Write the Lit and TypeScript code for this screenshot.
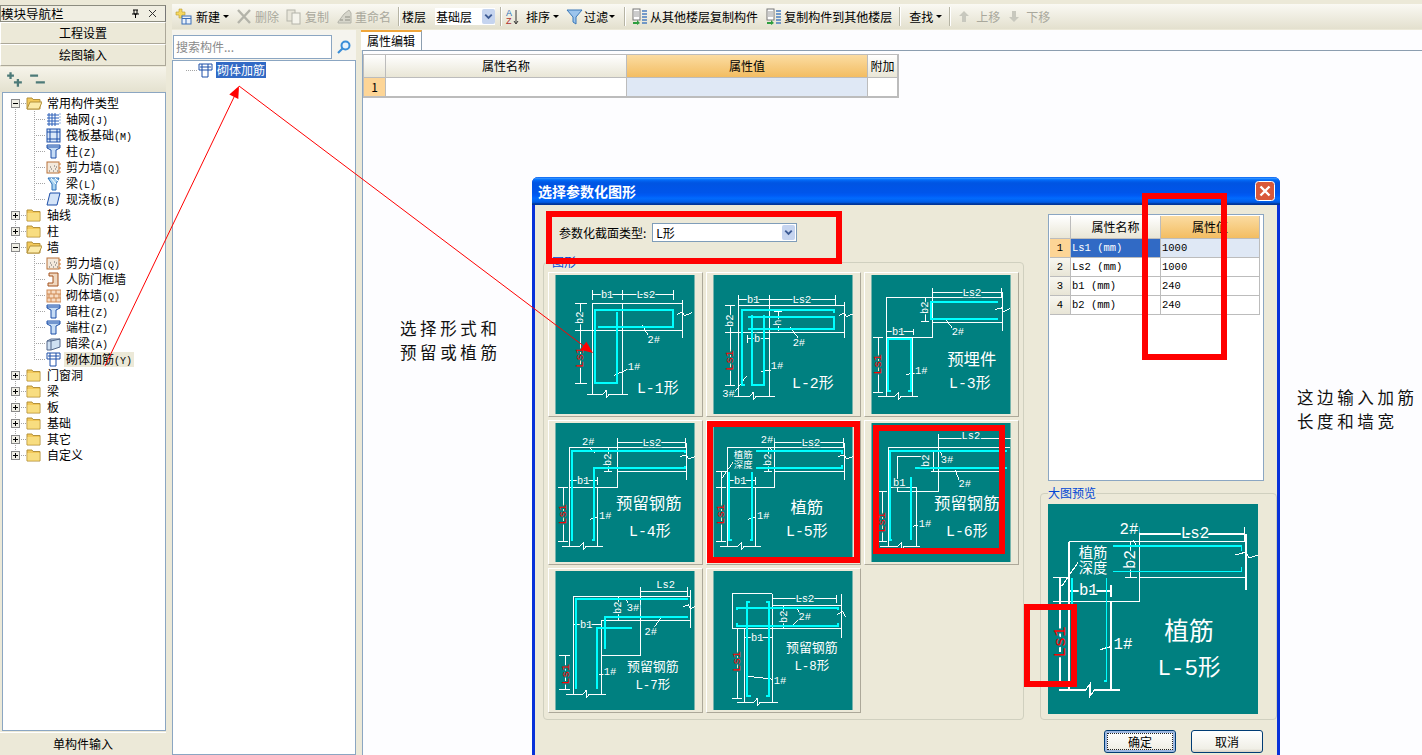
import { LitElement, css, html, svg } from "lit";
import { customElement } from "lit/decorators.js";

// one diagram = white lines, cyan rebar and labels, all in a 140x140 box
interface Shape {
  white: string;
  cyan: string;
  labels: [string, number, number, number?][];
  vert: [string, number, number][];
  red: [number, number];
}

const SHAPES: Shape[] = [
  {
    white:
      "M37 15V25M67 15V25M119 15V25M37 20H119M37 29H128M37 29V120M67 29V120M20 56H128M128 25V63M32 120H48L51 116V124L54 120H73M25 29V109M20 29H32M20 109H32M87 50L93 60M59 101L73 95M122 40L128 37L130 41L137 38",
    cyan: "M43 52H118V35H40V109H62V37",
    labels: [["b1", 52, 20], ["Ls2", 91, 20], ["2#", 99, 65], ["1#", 79, 93], ["L-1形", 103, 115, 15]],
    vert: [["b2", 25, 43]],
    red: [25, 83],
  },
  {
    white:
      "M25 20V30M56 20V30M123 20V30M25 25H123M25 31H132M25 31V122M56 31V122M12 58H132M132 27V63M20 122H37L40 118V126L43 122H62M17 31V111M12 31H22M12 111H22M65 37V56M61 37H69M34 64H56M34 60V68M77 52L85 63M48 97L58 96M33 102L20 120M126 41L132 38L134 42L141 39",
    cyan: "M32 111H29V35H121V38M35 42H121V54H35M39 40V111H51V40",
    labels: [["b1", 40, 25], ["Ls2", 89, 25], ["b", 44, 64], ["2#", 86, 68], ["1#", 64, 92], ["3#", 15, 120], ["L-2形", 100, 110, 15]],
    vert: [["b2", 17, 46], ["h", 65, 48]],
    red: [17, 86],
  },
  {
    white:
      "M61 13V23M131 13V23M61 18H131M15 23H131M15 23V122M61 23V63M15 63H61M61 48H131M132 17V56M41 63V122M7 122H24L27 118V126L30 122H47M15 57H42M42 54V60M54 23V47M50 47H58M7 63V118M2 63H12M2 118H12M74 44L81 53M35 100L44 99M124 35L131 33L133 37L139 34",
    cyan: "M127 27H60V44H127M20 117H17V64H40V117H37",
    labels: [["Ls2", 101, 18], ["b1", 27, 57], ["2#", 87, 57], ["1#", 50, 97], ["预埋件", 101, 86, 16.5], ["L-3形", 99, 110, 15]],
    vert: [["b2", 54, 33]],
    red: [7, 90],
  },
  {
    white:
      "M62 15V25M131 15V25M62 20H131M14 25H132M14 25V124M62 25V65M14 65H62M62 49H132M42 65V124M132 20V57M7 124H25L28 120V128L31 124H48M14 58H42M42 54V62M53 25V49M49 49H57M8 65V119M3 65H13M3 119H13M35 25L40 30M35 97L42 95M125 34L132 32L134 36L140 34",
    cyan: "M18 118H17V28H130V30M37 118H39V45H130V43",
    labels: [["Ls2", 97, 20], ["2#", 33, 19], ["b1", 28, 58], ["1#", 50, 94], ["预留钢筋", 94, 82, 16.5], ["L-4形", 95, 110, 15]],
    vert: [["b2", 53, 37]],
    red: [8, 92],
  },
  {
    white:
      "M61 15V25M131 15V25M61 20H131M14 25H132M14 25V124M61 25V65M14 65H61M61 49H132M42 65V124M132 20V57M7 124H25L28 120V128L31 124H48M14 58H42M42 54V62M55 25V49M51 49H59M8 49V119M3 49H13M3 65H13M3 119H13M57 24L59 28M20 39L9 55M35 97L42 95M125 34L132 32L134 36L140 34",
    cyan: "M19 118H16V49M37 118H39V49M43 28H129V31M43 45H129V42",
    labels: [["Ls2", 98, 20], ["2#", 54, 17], ["植筋", 30, 33, 9.5], ["深度", 30, 43, 9.5], ["b1", 27, 58], ["1#", 50, 94], ["植筋", 94, 86, 16.5], ["L-5形", 94, 110, 15]],
    vert: [["b2", 55, 37]],
    red: [8, 92],
  },
  {
    white:
      "M67 11V21M67 16H140M17 25H139M17 25V124M67 16V69M51 34H26V69H67M45 64V124M17 65H45M60 49H134M62 28V48M58 28H66M9 124H27L30 120V128L33 124H49M11 69V119M6 69H16M6 119H16M69 28L71 33M84 47L88 57M42 104L47 103",
    cyan: "M21 118H19V28H136M44 45H136M40 54V118",
    labels: [["Ls2", 100, 13], ["b1", 28, 60], ["3#", 76, 37], ["2#", 94, 61], ["1#", 54, 102], ["预留钢筋", 96, 82, 16.5], ["L-6形", 96, 110, 15]],
    vert: [["b2", 55, 38]],
    red: [11, 100],
  },
  {
    white:
      "M86 16V26M133 16V26M86 21H133M18 26H136M18 26V124M86 16V85M46 50H136M46 50V124M46 85H86M136 19V57M11 124H28L31 120V128L34 124H51M18 54H46M63 26V49M71 29L73 32M106 47L100 56M44 104H49M10 85V119M4 85H15M4 119H15M128 36L134 34L136 38L140 36",
    cyan: "M22 118H21V28H133M41 118H42V57H77M50 79V46H133",
    labels: [["Ls2", 111, 14], ["b1", 31, 54], ["3#", 78, 37], ["2#", 96, 61], ["1#", 55, 102], ["预留钢筋", 98, 97, 13], ["L-7形", 98, 116, 12.5]],
    vert: [["b2", 63, 37]],
    red: [11, 104],
  },
  {
    white:
      "M19 23H59V58H19ZM59 28H124M124 24V32M59 35H129M59 58H129M129 23V67M31 58V132M59 58V132M24 132H41L44 128V136L47 132H65M24 58V128M19 128H29M31 67H59M71 35V57M84 37L88 46L80 54M34 106L60 109M124 44L130 41L133 46",
    cyan: "M24 39V37H125V39M24 52V55H125V52M37 31H34V126H38M53 31H56V126H53",
    labels: [["Ls2", 92, 28], ["b1", 44, 67], ["2#", 92, 46], ["1#", 67, 111], ["预留钢筋", 99, 78, 13], ["L-8形", 99, 97, 12.5]],
    vert: [["b2", 71, 46]],
    red: [24, 91],
  },
];

function diagram(s: Shape, cls: string) {
  return html`<svg class=${cls} viewBox="0 0 140 140">
    <rect width="140" height="140" fill="#008080"></rect>
    <path class="wh" d=${s.white}></path>
    <path class="cy" d=${s.cyan}></path>
    ${s.labels.map(
      ([t, x, y, size]) => svg`<text class="lb" x=${x} y=${y} font-size=${size ?? 10.5}>${t}</text>`
    )}
    ${s.vert.map(
      ([t, x, y]) => svg`<text class="lb" x=${x} y=${y} font-size="10.5" transform="rotate(-90 ${x} ${y})">${t}</text>`
    )}
    <text class="lb rd" x=${s.red[0]} y=${s.red[1]} font-size="11.5" transform="rotate(-90 ${s.red[0]} ${s.red[1]})">Ls1</text>
  </svg>`;
}

const column = svg`<path d="M1 1H14V4L10 6V14H5V6L1 4Z" fill="#c6dcf5" stroke="#1d4fa8"/><path d="M1 3H14" stroke="#1d4fa8"/>`;
const wallDots = svg`<rect x="1" y="2" width="12" height="11" fill="#f3e9dc" stroke="#b9733a"/><path d="M3 11h1M5 9h1M7 11h1M9 9h1M4 7h1M8 6h1M11 11h1M10 7h1" stroke="#666"/><path d="M14 3v2M14 7v2M14 11v2" stroke="#d9782a"/>`;
const rebarIcon = svg`<path d="M1 1H14V7H1ZM4 1V14M10 1V14M4 14H10M2 4H13" fill="none" stroke="#1d4fa8"/>`;

const ICONS: Record<string, unknown> = {
  grid: svg`<path d="M1 3H13M1 6H13M1 9H13M1 12H13M3 1V14M6 1V14M9 1V14" stroke="#2a5fb8" fill="none"/><path d="M13 2h2M13 5h2M13 8h2M13 11h2" stroke="#8fb3e6"/>`,
  raft: svg`<rect x="1" y="1" width="13" height="13" fill="#dbe8f8" stroke="#1d4fa8"/><path d="M4 1V14M11 1V14M1 4H14M1 11H14" stroke="#1d4fa8"/>`,
  column,
  wall: wallDots,
  beam: svg`<path d="M2 2H13L10 8V14H6V8Z" fill="#a9d3f0" stroke="#2a6fb8"/><path d="M5 2L10 8M9 2L12 5" stroke="#fff"/>`,
  slab: svg`<path d="M4 1H14L11 13H1Z" fill="#d4e4f8" stroke="#1d4fa8"/>`,
  door: svg`<path d="M3 1H12V14H2V11H7V4H3Z" fill="#f0d8c0" stroke="#a4521e"/>`,
  brick: svg`<rect x="1" y="2" width="14" height="12" fill="#f7dcc4" stroke="#cf8a55"/><path d="M1 6H15M1 10H15M5 2V6M10 2V6M3 6V10M8 6V10M13 6V10M5 10V14M10 10V14" stroke="#cf8a55"/>`,
  dark: svg`<path d="M1 5L5 3H14V11L5 14H1Z" fill="#cfe0f2" stroke="#52678a"/><path d="M5 4V14M1 5H5L14 3" stroke="#52678a" fill="none"/>`,
  rebar: rebarIcon,
};

const TREE: { label: string; code?: string; icon?: string; open?: boolean; pos?: string; hot?: boolean }[] = [
  { label: "常用构件类型", open: true, pos: "first" },
  { label: "轴网", code: "(J)", icon: "grid" },
  { label: "筏板基础", code: "(M)", icon: "raft" },
  { label: "柱", code: "(Z)", icon: "column" },
  { label: "剪力墙", code: "(Q)", icon: "wall" },
  { label: "梁", code: "(L)", icon: "beam" },
  { label: "现浇板", code: "(B)", icon: "slab", pos: "last" },
  { label: "轴线" },
  { label: "柱" },
  { label: "墙", open: true },
  { label: "剪力墙", code: "(Q)", icon: "wall" },
  { label: "人防门框墙", icon: "door" },
  { label: "砌体墙", code: "(Q)", icon: "brick" },
  { label: "暗柱", code: "(Z)", icon: "column" },
  { label: "端柱", code: "(Z)", icon: "column" },
  { label: "暗梁", code: "(A)", icon: "dark" },
  { label: "砌体加筋", code: "(Y)", icon: "rebar", pos: "last", hot: true },
  { label: "门窗洞" },
  { label: "梁" },
  { label: "板" },
  { label: "基础" },
  { label: "其它" },
  { label: "自定义", pos: "end" },
];

const PARAMS = [
  ["1", "Ls1 (mm)", "1000"],
  ["2", "Ls2 (mm)", "1000"],
  ["3", "b1 (mm)", "240"],
  ["4", "b2 (mm)", "240"],
];

const caret = html`<i class="caret"></i>`;
const combo = html`<svg class="drop" viewBox="0 0 14 16"><rect width="14" height="16" rx="2" fill="#c5d4ef"/><path d="M3.5 6L7 9.5L10.5 6" fill="none" stroke="#3c5a94" stroke-width="2"/></svg>`;
const ic = (body: unknown) => html`<svg class="ti" viewBox="0 0 17 17">${body}</svg>`;
const copyIcon = svg`<rect x="2" y="1" width="7" height="11" fill="#fff" stroke="#777"/><path d="M3 4h5M3 6h5M3 8h5" stroke="#999"/><path d="M11 3h5M11 6h5M11 9h5M11 12h5M11 15h5" stroke="#4a7ec0" stroke-width="1.4"/><path d="M2 14H6V12L9 15L6 17V16H2Z" fill="#2e9e3f"/>`;

@customElement("app-root")
export class AppRoot extends LitElement {
  static styles = css`
    :host {
      display: block;
      position: relative;
      width: 1422px;
      height: 755px;
      overflow: hidden;
      background: #ece9d8;
      color: #000;
      font: 12px/16px "Noto Sans CJK SC", "Liberation Sans", sans-serif;
    }
    .code {
      font: 10px/1 "Liberation Mono", monospace;
    }
    .app {
      display: grid;
      grid-template-columns: 166px 1fr;
      column-gap: 6px;
      height: 755px;
      padding-top: 3px;
      box-sizing: border-box;
    }
    .left {
      display: flex;
      flex-direction: column;
      min-height: 0;
    }
    .navtitle {
      display: flex;
      align-items: center;
      height: 15px;
      margin-top: 2px;
      border: 1px solid #8c8c80;
      border-right-color: #777;
      background: #f0eee2;
      font-size: 12.5px;
    }
    .navtitle span {
      flex: 1;
    }
    .navtitle svg {
      width: 9px;
      height: 9px;
      margin-right: 8px;
    }
    .navbtn {
      height: 20px;
      border-top: 1px solid #fff;
      border-bottom: 1px solid #aca899;
      border-left: 1px solid #fff;
      border-right: 1px solid #aca899;
      text-align: center;
      line-height: 20px;
      background: #ece9d8;
    }
    .treebar {
      display: flex;
      align-items: center;
      gap: 6px;
      height: 25px;
      padding-left: 6px;
      margin-top: 1px;
      background: linear-gradient(#f6f4ea, #e4e1cf);
    }
    .treebar svg {
      width: 17px;
      height: 17px;
    }
    .tree {
      flex: 1;
      margin: 0 0 0 2px;
      padding-top: 2px;
      border: 1px solid #8ba6c2;
      background: #fff;
      overflow: hidden;
    }
    .row {
      display: flex;
      align-items: center;
      height: 16px;
      white-space: nowrap;
      --dot: repeating-linear-gradient(to bottom, #a5a5a5 0 1px, transparent 1px 2px);
      --hdot: repeating-linear-gradient(to right, #a5a5a5 0 1px, transparent 1px 2px);
      background-repeat: no-repeat;
    }
    .group {
      padding-left: 8px;
      background-image: var(--dot), var(--hdot);
      background-size: 1px 16px, 12px 1px;
      background-position: 12px 0, 12px 8px;
    }
    .group.first {
      background-size: 1px 8px, 12px 1px;
      background-position: 12px 8px, 12px 8px;
    }
    .group.end {
      background-size: 1px 8px, 12px 1px;
    }
    .item {
      padding-left: 43px;
      background-image: var(--dot), var(--dot), var(--hdot);
      background-size: 1px 16px, 1px 16px, 11px 1px;
      background-position: 12px 0, 31px 0, 31px 8px;
    }
    .item.last {
      background-size: 1px 16px, 1px 8px, 11px 1px;
    }
    .exp {
      width: 9px;
      height: 9px;
      flex: none;
      margin-right: 6px;
    }
    .folder {
      width: 16px;
      height: 14px;
      flex: none;
      margin-right: 5px;
    }
    .ni {
      width: 15px;
      height: 15px;
      flex: none;
      margin-right: 3px;
    }
    .lab {
      padding: 0 2px;
      line-height: 14px;
    }
    .group .lab {
      padding: 0;
    }
    .hot {
      background: #ece9d8;
    }
    .navfoot {
      height: 22px;
      margin-top: 1px;
      border-top: 1px solid #fff;
      text-align: center;
      line-height: 22px;
    }
    .main {
      display: flex;
      flex-direction: column;
      min-width: 0;
      min-height: 0;
    }
    .toolbar {
      display: flex;
      align-items: center;
      height: 25px;
      margin-top: 1px;
      padding-left: 3px;
      background: linear-gradient(#faf9f3, #e3e0ce);
      white-space: nowrap;
      flex: none;
    }
    .tool {
      display: flex;
      align-items: center;
      gap: 2px;
      margin-right: 7px;
    }
    .tool.off {
      color: #a9a89c;
    }
    .tool.new {
      gap: 4px;
    }
    .tool.sort {
      gap: 4px;
      margin-left: 1px;
    }
    .tool.filter span {
      margin-left: -1px;
    }
    .tool.from {
      margin-left: 3px;
    }
    .tool.find {
      margin-left: 6px;
      gap: 4px;
      margin-right: 5px;
    }
    .tool.up {
      margin-left: 3px;
      gap: 3px;
    }
    .tool.down {
      margin-left: -1px;
      gap: 3px;
    }
    .ti {
      width: 17px;
      height: 17px;
      flex: none;
    }
    .caret {
      width: 0;
      height: 0;
      margin-left: -1px;
      border: 3px solid transparent;
      border-top: 3px solid #000;
      border-bottom: 0;
    }
    .sep {
      width: 1px;
      height: 19px;
      margin-right: 2px;
      background: #b6b4a4;
      border-right: 1px solid #fff;
    }
    .sep.wide {
      margin-left: 2px;
    }
    .floor {
      display: flex;
      align-items: center;
      justify-content: space-between;
      width: 60px;
      height: 17px;
      margin: 0 5px 0 2px;
      background: #fff;
      padding-left: 1px;
      box-sizing: border-box;
    }
    .drop {
      width: 13px;
      height: 15px;
      flex: none;
    }
    .panes {
      flex: 1;
      display: flex;
      min-height: 0;
      margin-top: 1px;
    }
    .mid {
      width: 184px;
      flex: none;
      display: flex;
      flex-direction: column;
    }
    .search {
      display: flex;
      height: 30px;
      flex: none;
      background: #f5f4ee;
      padding: 5px 0 1px 1px;
      box-sizing: border-box;
    }
    .search .in {
      width: 155px;
      height: 22px;
      border: 1px solid #8ba6c2;
      background: #fff;
      color: #8a8a8a;
      line-height: 22px;
      padding-left: 2px;
      box-sizing: content-box;
      margin-top: 0;
    }
    .search svg {
      width: 14px;
      height: 14px;
      margin: 5px 0 0 5px;
    }
    .midtree {
      flex: 1;
      border: 1px solid #8ba6c2;
      background: #fff;
      padding-top: 1px;
    }
    .midrow {
      display: flex;
      align-items: center;
      height: 16px;
      padding-left: 13px;
    }
    .midrow .ni {
      margin: 0;
    }
    .dots {
      width: 11px;
      height: 1px;
      margin-right: 1px;
      background: repeating-linear-gradient(to right, #a5a5a5 0 1px, transparent 1px 2px);
    }
    .sel {
      margin-left: 3px;
      padding: 0 1px;
      background: #316ac5;
      color: #fff;
    }
    .content {
      flex: 1;
      margin-left: 6px;
      border-left: 1px solid #8ba6c2;
      background: #fdfdff;
      min-width: 0;
    }
    .tabs {
      display: flex;
      height: 20px;
      border-bottom: 1px solid #8c9eb0;
    }
    .tab {
      width: 60px;
      margin-left: -2px;
      border-top: 2px solid #f0a63a;
      border-right: 1px solid #8c9eb0;
      background: #fff;
      text-align: center;
      line-height: 18px;
      height: 18px;
    }
    .grid {
      display: grid;
      margin: 3px 0 0 0;
      width: 536px;
      border: 1px solid #bcbcbc;
      box-sizing: border-box;
      grid-template-columns: 22px 241px 241px 1fr;
      grid-template-rows: 23px 19px;
    }
    .c {
      border-right: 1px solid #bcbcbc;
      border-bottom: 1px solid #bcbcbc;
      padding: 0 1px;
      line-height: 18px;
      white-space: nowrap;
      overflow: hidden;
      background: #fff;
    }
    .h {
      text-align: center;
      line-height: 22px;
      background: linear-gradient(#fff, #e9e6d6);
    }
    .ha {
      background: linear-gradient(#fbdca2, #f3bd62);
    }
    .rn {
      text-align: center;
      background: linear-gradient(#f8f7f0, #e8e5d6);
    }
    .rna {
      background: #fdd596;
    }
    .va {
      background: #dfe8f5;
    }
    .dialog {
      position: absolute;
      left: 532px;
      top: 177px;
      width: 748px;
      height: 600px;
      border-radius: 6px 6px 0 0;
      background: #ece9d8;
      border-left: 3px solid #0831d9;
      border-right: 3px solid #0831d9;
      box-sizing: border-box;
    }
    .dtitle {
      display: flex;
      align-items: center;
      justify-content: space-between;
      height: 28px;
      margin: 0 -3px;
      padding: 0 5px 0 6px;
      border-radius: 6px 6px 0 0;
      color: #fff;
      font-size: 14px;
      font-weight: 700;
      background: linear-gradient(#0058ee 0%, #3593ff 4%, #288eff 6%, #127dff 8%, #036ffc 10%, #0262ee 14%, #0057e5 20%, #0054e3 24%, #0055eb 56%, #005bf5 66%, #026afe 76%, #0062ef 86%, #0052d6 92%, #0040ab 94%, #003092 100%);
    }
    .dtitle svg {
      width: 20px;
      height: 20px;
    }
    .dbody {
      display: flex;
      padding: 0 3px 0 8px;
      gap: 16px;
      height: 515px;
    }
    .dleft {
      width: 481px;
      flex: none;
    }
    .typerow {
      display: flex;
      align-items: center;
      gap: 6px;
      padding: 18px 0 0 16px;
      height: 19px;
    }
    .typebox {
      display: flex;
      align-items: center;
      justify-content: space-between;
      width: 145px;
      height: 19px;
      border: 1px solid #7f9db9;
      background: #fff;
      box-sizing: border-box;
      padding: 0 1px 0 3px;
    }
    fieldset {
      margin: 0;
      padding: 0;
      min-width: 0;
      border: 1px solid #d0d0bf;
      border-radius: 4px;
    }
    legend {
      padding: 0;
      color: #0046d5;
      line-height: 12px;
      height: 12px;
    }
    .gshapes {
      margin-top: 14px;
      height: 464px;
      box-sizing: border-box;
      padding: 4px 0 0 4px;
    }
    .gshapes legend {
      margin-left: 4px;
    }
    .cells {
      display: grid;
      grid-template-columns: repeat(3, 155px);
      grid-auto-rows: 145px;
      gap: 3px;
    }
    .cell {
      padding: 2px 6px 2px 6px;
      border: 1px solid;
      border-color: #fff #aca899 #aca899 #fff;
      box-sizing: border-box;
    }
    .tile {
      display: block;
      width: 140px;
      height: 139px;
    }
    .big {
      display: block;
      width: 210px;
      height: 210px;
    }
    .wh {
      fill: none;
      stroke: #fff;
      stroke-width: 1;
      shape-rendering: crispEdges;
    }
    .big .wh {
      stroke-width: 0.75;
    }
    .cy {
      fill: none;
      stroke: #00ffff;
      stroke-width: 2;
      shape-rendering: crispEdges;
    }
    .big .cy {
      stroke-width: 1.3;
    }
    .lb {
      fill: #fff;
      font-family: "Liberation Mono", "Noto Sans CJK SC", monospace;
      text-anchor: middle;
      dominant-baseline: central;
      paint-order: stroke;
      stroke: #008080;
      stroke-width: 2.4px;
    }
    .rd {
      fill: #ff0000;
    }
    .dright {
      width: 237px;
      flex: none;
      padding-top: 9px;
    }
    .ptable {
      display: grid;
      margin-left: 8px;
      width: 216px;
      height: 267px;
      border: 1px solid #8ba6c2;
      box-sizing: border-box;
      padding: 1px;
      background: #fff;
      grid-template-columns: 21px 90px 99px;
      grid-template-rows: 23px repeat(4, 19px) 1fr;
    }
    .ptable .c {
      font-family: "Liberation Mono", "Noto Sans CJK SC", monospace;
      font-size: 10.5px;
      line-height: 18px;
    }
    .ptable .h {
      font: 12px/22px "Noto Sans CJK SC", sans-serif;
    }
    .ptable .sn {
      background: #316ac5;
      color: #fff;
    }
    .gbig {
      margin-top: 6px;
      height: 233px;
      padding: 5px 0 0 7px;
      box-sizing: border-box;
    }
    .dfoot {
      display: flex;
      justify-content: flex-end;
      gap: 15px;
      padding: 10px 14px 0 0;
    }
    .btn {
      width: 72px;
      height: 23px;
      border: 1px solid #003c74;
      border-radius: 3px;
      box-sizing: border-box;
      background: linear-gradient(#fff, #f0efe6 85%, #d6d0c5);
      text-align: center;
      line-height: 21px;
    }
    .btn.def {
      box-shadow: inset 0 0 0 2px #9db8e2;
      outline: 1px dotted #222;
      outline-offset: -4px;
    }
    .marks {
      position: absolute;
      left: 0;
      top: 0;
      width: 1422px;
      height: 755px;
      pointer-events: none;
    }
    .marks rect {
      fill: none;
      stroke: #ff0000;
      stroke-width: 6;
    }
    .marks .ar {
      fill: none;
      stroke: #ff0000;
      stroke-width: 1;
    }
    .marks polygon {
      fill: #ff0000;
    }
    .note {
      position: absolute;
      font-size: 16.5px;
      line-height: 24px;
      letter-spacing: 3.6px;
      white-space: nowrap;
      color: #111;
    }
    .note.pick {
      left: 400px;
      top: 316px;
    }
    .note.input {
      left: 1297px;
      top: 385px;
    }
  `;

  private expander(open: boolean) {
    return html`<svg class="exp" viewBox="0 0 9 9">
      <rect x=".5" y=".5" width="8" height="8" fill="#f0efe6" stroke="#8a8a8a"></rect>
      <path d=${open ? "M2 4.5H7" : "M2 4.5H7M4.5 2V7"} stroke="#000"></path>
    </svg>`;
  }

  private folder(open: boolean) {
    return html`<svg class="folder" viewBox="0 0 16 14">
      <path d="M1 2H6L7 3.5H14V13H1Z" fill="#f3c95a" stroke="#b4923c"></path>
      ${open
        ? svg`<path d="M1 13L4 6H16L13 13Z" fill="#fbeaa8" stroke="#b4923c"/>`
        : svg`<rect x="1.5" y="5" width="12" height="7.5" fill="#f8dd80"/>`}
    </svg>`;
  }

  private treeRow(r: (typeof TREE)[number]) {
    if (!r.icon) {
      return html`<div class="row group ${r.pos ?? ""}">
        ${this.expander(!!r.open)}${this.folder(!!r.open)}<span class="lab">${r.label}</span>
      </div>`;
    }
    return html`<div class="row item ${r.pos ?? ""}">
      <svg class="ni" viewBox="0 0 15 15">${ICONS[r.icon]}</svg>
      <span class="lab ${r.hot ? "hot" : ""}">${r.label}<span class="code">${r.code ?? ""}</span></span>
    </div>`;
  }

  private renderLeft() {
    return html`<div class="left">
      <div class="navtitle">
        <span>模块导航栏</span>
        <svg viewBox="0 0 9 9"><path d="M2 1H7M3 1V5H6V1M1 5H8M4.5 5V9" fill="none" stroke="#000"></path></svg>
        <svg viewBox="0 0 9 9"><path d="M1 1L8 8M8 1L1 8" stroke="#333"></path></svg>
      </div>
      <div class="navbtn">工程设置</div>
      <div class="navbtn">绘图输入</div>
      <div class="treebar">
        <svg viewBox="0 0 15 15"><path d="M1 4H7M4 1V7M7 10H14M10.5 7V14" stroke="#4d7a78" stroke-width="2"></path></svg>
        <svg viewBox="0 0 15 15"><path d="M1 4H8M6 10H14" stroke="#4d7a78" stroke-width="2"></path></svg>
      </div>
      <div class="tree">${TREE.map((r) => this.treeRow(r))}</div>
      <div class="navfoot">单构件输入</div>
    </div>`;
  }

  private renderToolbar() {
    const g = "#b4b4aa";
    return html`<div class="toolbar">
      <div class="tool new">
        ${ic(svg`<path d="M1 4H4V1H7V4H10V7H7V10H4V7H1Z" fill="#f6d860" stroke="#b89a30" stroke-width=".6"/><rect x="7" y="8" width="9" height="8" fill="#eaf1fb" stroke="#3a6fb8"/><path d="M7 10.500H16M11 10V16" stroke="#3a6fb8"/>`)}<span>新建</span>${caret}
      </div>
      <div class="tool off">
        ${ic(svg`<path d="M2 2L14 15M14 2L2 15" stroke=${g} stroke-width="2.4"/>`)}<span>删除</span>
      </div>
      <div class="tool off">
        ${ic(svg`<rect x="1" y="2" width="8" height="11" fill="#e8e6da" stroke=${g}/><rect x="6" y="5" width="8" height="11" fill="#f5f4ec" stroke=${g}/>`)}<span>复制</span>
      </div>
      <div class="tool off">
        ${ic(svg`<path d="M2 14L8 6L13 2L15 5V15H2Z" fill="#d6d5ca" stroke=${g}/><path d="M4 12h3M9 9h5M9 12h5" stroke="#8f8f85"/>`)}<span>重命名</span>
      </div>
      <i class="sep"></i>
      <div class="tool"><span>楼层</span></div>
      <div class="floor"><span>基础层</span>${combo}</div>
      <i class="sep"></i>
      <div class="tool sort">
        ${ic(svg`<text x="1" y="7.500" font-size="9" fill="#2a6fb8" font-family="Liberation Sans">A</text><text x="1" y="16" font-size="9" fill="#b03030" font-family="Liberation Sans">Z</text><path d="M11 2V15M9 13L11 16L13 13" fill="none" stroke="#333"/>`)}
        <span>排序</span>${caret}
      </div>
      <div class="tool filter">
        ${ic(svg`<path d="M1 2H16L10 9V16L7 14V9Z" fill="#9cc4ec" stroke="#3a78b8"/>`)}<span>过滤</span>${caret}
      </div>
      <i class="sep wide"></i>
      <div class="tool from">${ic(copyIcon)}<span>从其他楼层复制构件</span></div>
      <div class="tool">${ic(copyIcon)}<span>复制构件到其他楼层</span></div>
      <i class="sep"></i>
      <div class="tool find"><span>查找</span>${caret}</div>
      <i class="sep wide"></i>
      <div class="tool off up">
        ${ic(svg`<path d="M8 3L13 8H10V14H6V8H3Z" fill="#c8c8be"/>`)}<span>上移</span>
      </div>
      <div class="tool off down">
        ${ic(svg`<path d="M8 14L13 9H10V3H6V9H3Z" fill="#c8c8be"/>`)}<span>下移</span>
      </div>
    </div>`;
  }

  private renderContent() {
    return html`<div class="panes">
      <div class="mid">
        <div class="search">
          <div class="in">搜索构件...</div>
          <svg viewBox="0 0 14 14">
            <circle cx="8.500" cy="5.500" r="4" fill="#e8f3fc" stroke="#3a8ed8" stroke-width="2"></circle>
            <path d="M5.500 8.500L1 13" stroke="#3a8ed8" stroke-width="2.200"></path>
          </svg>
        </div>
        <div class="midtree">
          <div class="midrow">
            <i class="dots"></i>
            <svg class="ni" viewBox="0 0 15 15">${rebarIcon}</svg>
            <span class="sel">砌体加筋</span>
          </div>
        </div>
      </div>
      <div class="content">
        <div class="tabs"><div class="tab">属性编辑</div></div>
        <div class="grid">
          <div class="c h"></div>
          <div class="c h">属性名称</div>
          <div class="c h ha">属性值</div>
          <div class="c h">附加</div>
          <div class="c rn rna">1</div>
          <div class="c"></div>
          <div class="c va"></div>
          <div class="c"></div>
        </div>
      </div>
    </div>`;
  }

  private renderDialog() {
    return html`<div class="dialog">
      <div class="dtitle">
        <span>选择参数化图形</span>
        <svg viewBox="0 0 20 20">
          <rect x=".5" y=".5" width="19" height="19" rx="3" fill="#d9583a" stroke="#fff"></rect>
          <path d="M5.500 5.500L14.500 14.500M14.500 5.500L5.500 14.500" stroke="#fff" stroke-width="2.400"></path>
        </svg>
      </div>
      <div class="dbody">
        <div class="dleft">
          <div class="typerow">
            <span>参数化截面类型:</span>
            <div class="typebox"><span>L形</span>${combo}</div>
          </div>
          <fieldset class="gshapes">
            <legend>图形</legend>
            <div class="cells">
              ${SHAPES.map((s) => html`<div class="cell">${diagram(s, "tile")}</div>`)}
            </div>
          </fieldset>
        </div>
        <div class="dright">
          <div class="ptable">
            <div class="c h"></div>
            <div class="c h">属性名称</div>
            <div class="c h ha">属性值</div>
            ${PARAMS.map(
              ([n, name, val], i) => html`
                <div class="c rn ${i === 0 ? "rna" : ""}">${n}</div>
                <div class="c ${i === 0 ? "sn" : ""}">${name}</div>
                <div class="c ${i === 0 ? "va" : ""}">${val}</div>
              `
            )}
          </div>
          <fieldset class="gbig">
            <legend>大图预览</legend>
            ${diagram(SHAPES[4], "big")}
          </fieldset>
        </div>
      </div>
      <div class="dfoot">
        <div class="btn def">确定</div>
        <div class="btn">取消</div>
      </div>
    </div>`;
  }

  render() {
    return html`
      <div class="app">
        ${this.renderLeft()}
        <div class="main">${this.renderToolbar()}${this.renderContent()}</div>
      </div>
      ${this.renderDialog()}
      <div class="note pick">选择形式和<br />预留或植筋</div>
      <div class="note input">这边输入加筋<br />长度和墙宽</div>
      <svg class="marks" viewBox="0 0 1422 755">
        <rect x="549" y="214" width="290" height="47"></rect>
        <rect x="1145" y="196" width="79" height="161"></rect>
        <rect x="1027" y="607" width="47" height="77"></rect>
        <rect x="710" y="424" width="147" height="136"></rect>
        <rect x="876" y="428" width="126" height="123"></rect>
        <path class="ar" d="M105 366L235 95M239 86L585 347"></path>
        <polygon points="239,86 238.300,99 229.300,94.600"></polygon>
        <polygon points="593,353 586.400,341.800 580.400,349.800"></polygon>
      </svg>
    `;
  }
}
